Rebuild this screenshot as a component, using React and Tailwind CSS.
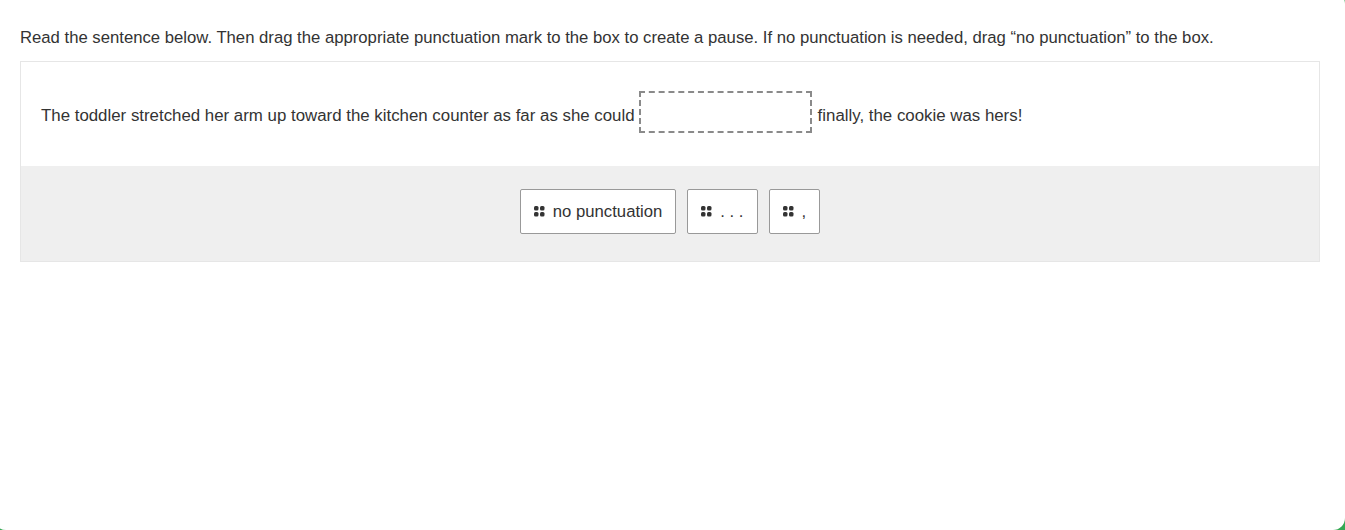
const Grip = () => (
  <svg className="h-[11px] w-[11px] shrink-0" viewBox="0 0 11 11" fill="#333">
    <rect x="0" y="0" width="4.5" height="4.5" rx="1.5" />
    <rect x="6" y="0" width="4.5" height="4.5" rx="1.5" />
    <rect x="0" y="6" width="4.5" height="4.5" rx="1.5" />
    <rect x="6" y="6" width="4.5" height="4.5" rx="1.5" />
  </svg>
);

const Chip = ({ label }) => (
  <button
    type="button"
    className="flex h-[45px] items-center gap-[8px] rounded-[2px] border border-[#999] bg-white px-[13px] text-[16.7px] text-[#333]"
  >
    <Grip />
    <span>{label}</span>
  </button>
);

export default function App() {
  return (
    <div className="h-[530px] w-full overflow-hidden bg-[#34a853]" style={{ fontFamily: '"Liberation Sans", Arial, sans-serif' }}>
      <div className="-mt-[8px] -ml-[6px] h-[538px] w-[1351px] rounded-[12px] bg-white pt-[8px] pl-[6px]">
        <div className="px-[20px] pt-[27px] text-[#333]">
          <p className="text-[16.7px] leading-[22px]">
            Read the sentence below. Then drag the appropriate punctuation mark to the box to create a pause. If no punctuation is needed, drag “no punctuation” to the box.
          </p>
          <div className="mt-[12px] w-[1300px] border border-[#e6e6e6]">
            <div className="flex h-[104px] items-start px-[20px] text-[16.85px] leading-[22px]">
              <span className="mt-[43px]">The toddler stretched her arm up toward the kitchen counter as far as she could</span>
              <div className="mt-[29px] mr-[6px] ml-[4px] h-[42px] w-[173px] border-2 border-dashed border-[#8a8a8a] bg-white" />
              <span className="mt-[43px]">finally, the cookie was hers!</span>
            </div>
            <div className="flex h-[95px] items-start justify-center gap-[11px] bg-[#efefef] pt-[23px]">
              <Chip label="no punctuation" />
              <Chip label=". . ." />
              <Chip label="," />
            </div>
          </div>
        </div>
      </div>
    </div>
  );
}
